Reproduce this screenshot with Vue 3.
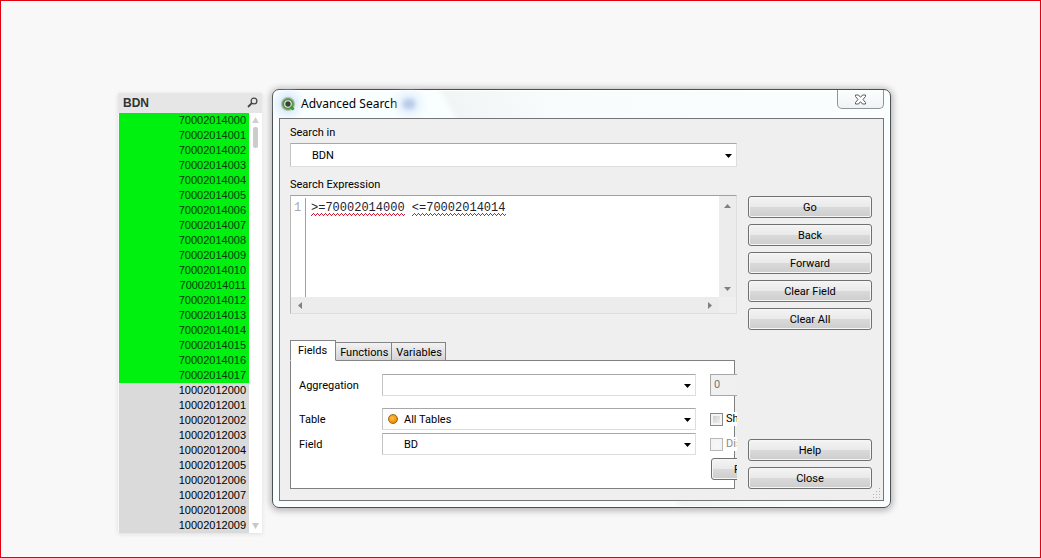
<script setup>
import { computed, ref } from 'vue'

const pad = (n) => String(n).padStart(3, '0')
const rows = [
  ...Array.from({ length: 18 }, (_, i) => ({ value: '70002014' + pad(i), selected: true })),
  ...Array.from({ length: 10 }, (_, i) => ({ value: '10002012' + pad(i), selected: false })),
]

const CHAR_WIDTH = 7.2
const expression = ref('>=70002014000 <=70002014014')
const words = computed(() => expression.value.split(' '))
const wordWidth = (word) => Math.round(word.length * CHAR_WIDTH)
const mainActions = ['Go', 'Back', 'Forward', 'Clear Field', 'Clear All']
const footActions = ['Help', 'Close']
const tabs = ['Fields', 'Functions', 'Variables']
const activeTab = ref('Fields')
</script>

<template>
  <main class="sheet">
    <section class="listbox" aria-label="BDN">
      <header class="listbox-head">
        <h2>BDN</h2>
        <button class="plain" type="button" aria-label="Search">
          <svg width="11" height="11" viewBox="0 0 11 11" fill="none" stroke="#444">
            <circle cx="7" cy="4" r="2.9" stroke-width="1.2" />
            <path d="M4.8 6.2 1 10" stroke-width="1.8" />
          </svg>
        </button>
      </header>
      <div class="listbox-body">
        <ul>
          <li v-for="row in rows" :key="row.value" :class="{ selected: row.selected }">{{ row.value }}</li>
        </ul>
        <div class="list-scroll">
          <svg width="7" height="6" viewBox="0 0 7 6"><path d="M3.5 0 7 6H0z" fill="#d0d0d0" /></svg>
          <span class="thumb"></span>
          <svg class="down" width="7" height="6" viewBox="0 0 7 6"><path d="M3.5 6 7 0H0z" fill="#c8c8c8" /></svg>
        </div>
      </div>
    </section>

    <section class="window" aria-label="Advanced Search">
      <header class="titlebar">
        <svg class="logo" width="16" height="16" viewBox="0 0 16 16">
          <circle cx="8" cy="8" r="7" fill="#a9bda4" />
          <circle cx="8" cy="8" r="4.8" fill="#e9f1e4" stroke="#5c8f50" stroke-width="2" />
          <path d="m10.5 10.5 4 4" stroke="#3f9a2c" stroke-width="2.6" />
          <circle cx="8" cy="8" r="2.7" fill="#34423a" />
        </svg>
        <h1>Advanced Search</h1>
        <span class="reflection"></span>
        <button class="close" type="button" aria-label="Close window">
          <svg width="13" height="11" viewBox="0 0 13 11">
            <path d="M1.5 1h3L6.5 3.300 8.500 1h3v1.500L9 5.500l2.500 3V10h-3l-2-2.300L4.500 10h-3V8.500L4 5.500l-2.500-3z" fill="#fff" stroke="#555b68" />
          </svg>
        </button>
      </header>

      <div class="client">
        <div class="content">
          <label class="caption" for="search-in">Search in</label>
          <div class="combo combo-tall">
            <select id="search-in"><option>BDN</option></select>
            <svg class="arrow" width="7" height="4" viewBox="0 0 7 4"><path d="M0 0h7L3.500 4z" /></svg>
          </div>

          <label class="caption caption-gap" for="expression">Search Expression</label>
          <div class="editor">
            <div class="code">
              <span class="gutter">1</span>
              <div class="code-area">
                <textarea id="expression" v-model="expression" spellcheck="false"></textarea>
                <div class="squiggles" aria-hidden="true">
                  <svg v-for="(word, i) in words" :key="i" :width="wordWidth(word)" height="3" shape-rendering="crispEdges">
                    <defs>
                      <pattern :id="'wave' + i" width="4" height="3" patternUnits="userSpaceOnUse">
                        <path d="M0 2h1v1H0zM1 1h1v1H1zM2 0h1v1H2zM3 1h1v1H3z" fill="#d41830" />
                      </pattern>
                    </defs>
                    <rect width="100%" height="3" :fill="'url(#wave' + i + ')'" />
                  </svg>
                </div>
              </div>
            </div>
            <div class="vbar">
              <svg width="7" height="4" viewBox="0 0 7 4"><path d="M3.500 0 7 4H0z" /></svg>
              <svg width="7" height="4" viewBox="0 0 7 4"><path d="M3.500 4 7 0H0z" /></svg>
            </div>
            <div class="hbar">
              <svg width="4" height="7" viewBox="0 0 4 7"><path d="M0 3.500 4 0v7z" /></svg>
              <svg width="4" height="7" viewBox="0 0 4 7"><path d="M4 3.500 0 0v7z" /></svg>
            </div>
          </div>

          <div class="tabs" role="tablist">
            <button
              v-for="tab in tabs"
              :key="tab"
              type="button"
              role="tab"
              class="tab"
              :class="{ active: tab === activeTab }"
              :aria-selected="tab === activeTab"
              @click="activeTab = tab"
            >{{ tab }}</button>
          </div>
          <div class="panel" role="tabpanel">
            <div class="form-row row-first">
              <label for="aggregation">Aggregation</label>
              <div class="combo">
                <select id="aggregation"><option></option></select>
                <svg class="arrow" width="7" height="4" viewBox="0 0 7 4"><path d="M0 0h7L3.500 4z" /></svg>
              </div>
              <div class="extra"><input class="amount" type="text" value="0" aria-label="Percentile" disabled /></div>
            </div>
            <div class="form-row">
              <label for="table">Table</label>
              <div class="combo">
                <select id="table"><option>All Tables</option></select>
                <span class="dot"></span>
                <svg class="arrow" width="7" height="4" viewBox="0 0 7 4"><path d="M0 0h7L3.500 4z" /></svg>
              </div>
              <div class="extra"><label class="check"><input type="checkbox" />Show</label></div>
            </div>
            <div class="form-row">
              <label for="field">Field</label>
              <div class="combo">
                <select id="field"><option>BD</option></select>
                <svg class="arrow" width="7" height="4" viewBox="0 0 7 4"><path d="M0 0h7L3.500 4z" /></svg>
              </div>
              <div class="extra"><label class="check off"><input type="checkbox" disabled />Distinct</label></div>
            </div>
            <div class="form-row row-last">
              <div class="extra"><button class="btn paste" type="button">Paste</button></div>
            </div>
          </div>
        </div>

        <div class="actions">
          <button v-for="a in mainActions" :key="a" class="btn" type="button">{{ a }}</button>
          <span class="spacer"></span>
          <button v-for="a in footActions" :key="a" class="btn" type="button">{{ a }}</button>
        </div>

        <svg class="grip" width="10" height="10" viewBox="0 0 10 10" fill="#b4b4b4">
          <path d="M8 0h1v1H8zM8 3h1v1H8zM5 3h1v1H5zM8 6h1v1H8zM5 6h1v1H5zM2 6h1v1H2zM8 9h1v1H8zM5 9h1v1H5zM2 9h1v1H2z" />
        </svg>
      </div>
    </section>
  </main>
</template>

<style>
body {
  margin: 0;
  background: #f8f8f8;
}
</style>

<style scoped>
* {
  box-sizing: border-box;
}
.sheet {
  display: flex;
  align-items: flex-start;
  gap: 10px;
  min-height: 100vh;
  padding: 88px 149px 24px 117px;
  border: 1px solid #e00010;
  background: #f8f8f8;
  font: 11px/14px Roboto, "Liberation Sans", sans-serif;
  color: #000;
}
button,
input,
select,
textarea {
  margin: 0;
  padding: 0;
  font: inherit;
  color: inherit;
}
svg {
  display: block;
  flex: none;
}
h1,
h2,
ul {
  margin: 0;
  padding: 0;
  list-style: none;
}

/* list box */
.listbox {
  flex: none;
  width: 144px;
  margin-top: 4px;
  box-shadow: 0 1px 4px #ddd;
}
.listbox-head {
  display: flex;
  align-items: center;
  justify-content: space-between;
  height: 20px;
  padding: 0 4px 2px 5px;
  background: #e6e6e6;
}
.listbox-head h2 {
  padding-top: 2px;
  font: bold 12px/18px "Liberation Sans", sans-serif;
  color: #333;
}
.plain {
  border: 0;
  background: none;
}
.listbox-body {
  display: flex;
}
.listbox-body ul {
  flex: 1;
  padding-left: 1px;
}
.listbox-body li {
  height: 15px;
  padding-right: 3px;
  background: #dadada;
  font: 11px/15px "Liberation Sans", sans-serif;
  text-align: right;
}
.listbox-body .selected {
  background: #00f010;
  color: #063c08;
}
.list-scroll {
  display: flex;
  flex-direction: column;
  align-items: center;
  width: 13px;
  padding: 4px 0;
  background: #fff;
}
.thumb {
  width: 5px;
  height: 21px;
  margin-top: 4px;
  border-radius: 2px;
  background: #ccc;
}
.down {
  margin-top: auto;
}

/* dialog window */
.window {
  flex: 1;
  min-width: 0;
  padding: 0 6px 6px;
  border: 1px solid #4c5052;
  border-radius: 7px;
  background: linear-gradient(60deg, #f9feff 47%, #f1f5f6 48%, #f8fcfc 60%, #fbfefe);
  box-shadow: inset 0 0 0 1px #fff, 0 1px 6px 2px #b8b8b8;
}
.titlebar {
  display: flex;
  align-items: center;
  height: 28px;
}
.logo {
  margin-left: 1px;
  border-radius: 50%;
  background: #dcebfa;
  box-shadow: 0 0 7px 4px #dcebfa;
}
.titlebar h1 {
  margin-left: 5px;
  font: 12px/28px "Noto Sans", sans-serif;
}
.reflection {
  width: 12px;
  height: 10px;
  margin-left: 6px;
  border-radius: 4px;
  background: #b9cbe8;
  box-shadow: 0 0 9px 5px #dcecfb;
  filter: blur(2px);
}
.close {
  display: flex;
  align-items: center;
  justify-content: center;
  align-self: flex-start;
  width: 47px;
  height: 19px;
  margin-left: auto;
  border: 1px solid #8f9499;
  border-top: 0;
  border-radius: 0 0 5px 5px;
  background: linear-gradient(#fdfefe, #eff3f4);
}
.client {
  position: relative;
  display: flex;
  gap: 11px;
  padding: 0 11px 11px 10px;
  border: 1px solid #757575;
  background: #efefef;
}
.content {
  flex: 1;
  min-width: 0;
}
.caption {
  display: block;
  padding: 7px 0 3px;
}
.caption-gap {
  padding-top: 11px;
}

.combo {
  position: relative;
  flex: 1;
  min-width: 0;
}
.combo select {
  display: block;
  width: 100%;
  height: 22px;
  padding: 2px 20px 0 21px;
  appearance: none;
  border: 1px solid #dedede;
  border-top-color: #a8a8a8;
  border-left-color: #c4c4c4;
  border-radius: 0;
  background: #fff;
}
.combo-tall select {
  height: 24px;
}
.arrow {
  position: absolute;
  top: 50%;
  right: 5px;
  margin-top: -1px;
}
.dot {
  position: absolute;
  top: 6px;
  left: 6px;
  width: 10px;
  height: 10px;
  border: 1px solid #96661c;
  border-radius: 50%;
  background: radial-gradient(circle at 40% 40%, #ffc04a, #ef8c00 70%);
}

/* expression editor */
.editor {
  display: grid;
  grid-template-columns: 1fr 17px;
  grid-template-rows: 101px 16px;
  border: 1px solid #dedede;
  border-top-color: #a0a0a0;
  border-left-color: #b8b8b8;
  background: #efefef;
}
.code {
  display: flex;
  background: #fff;
  font: 12px/14px "Liberation Mono", monospace;
}
.gutter {
  width: 15px;
  margin-top: 2px;
  padding: 3px 3px 0;
  border-right: 1px solid #a0a0a0;
  color: #a8a8a8;
}
.code-area {
  position: relative;
  flex: 1;
}
.code-area textarea {
  display: block;
  width: 100%;
  height: 100%;
  padding: 5px 5px 0;
  border: 0;
  outline: 0;
  resize: none;
  overflow: hidden;
  background: none;
  color: #223;
}
.squiggles {
  position: absolute;
  top: 17px;
  left: 5px;
  display: flex;
  gap: 7px;
  pointer-events: none;
}
.vbar,
.hbar {
  display: flex;
  align-items: center;
  justify-content: space-between;
  background: #ececec;
  fill: #808080;
}
.vbar {
  flex-direction: column;
  padding: 8px 0 6px;
}
.hbar {
  padding: 0 7px;
}

/* tabs */
.tabs {
  display: flex;
  align-items: flex-end;
  height: 21px;
  margin-top: 26px;
}
.tab {
  height: 19px;
  padding: 1px 3px 0 4px;
  border: 1px solid #858585;
  border-left-width: 0;
  background: linear-gradient(#f2f2f2, #d4d4d4);
  line-height: 17px;
}
.tab.active {
  position: relative;
  height: 21px;
  padding: 0 8px 0 7px;
  border-left-width: 1px;
  border-bottom-color: #fff;
  background: #fff;
}
.panel {
  margin: -1px 2px 0 0;
  padding: 13px 0 8px 8px;
  border: 1px solid #808080;
  background: #fff;
}
.form-row {
  display: flex;
  align-items: center;
  height: 22px;
  margin: 0 -3px 3px 0;
}
.row-first {
  margin-bottom: 12px;
}
.row-last {
  justify-content: flex-end;
  margin-bottom: 0;
}
.form-row > label {
  flex: none;
  width: 83px;
  padding-top: 2px;
}
.extra {
  flex: none;
  width: 27px;
  margin-left: 14px;
  overflow: hidden;
  background: #fff;
}
.amount {
  display: block;
  width: 60px;
  height: 22px;
  padding: 0 3px 2px;
  border: 1px solid #a8a8a8;
  background: #f0f0f0;
  color: #777;
}
.check {
  display: flex;
  align-items: center;
  gap: 3px;
  width: 90px;
}
.check input {
  flex: none;
  width: 13px;
  height: 13px;
  appearance: none;
  border: 1px solid #8a8a8a;
  background: linear-gradient(135deg, #c4c4c4, #fafafa);
  box-shadow: inset 0 0 0 2px #f4f4f4;
}
.off {
  color: #8a8a8a;
}
.check.off input {
  border-color: #b8b8b8;
  background: #f6f6f6;
}

.actions {
  display: flex;
  flex-direction: column;
  gap: 6px;
  width: 124px;
  padding-top: 77px;
}
.btn {
  height: 22px;
  padding-top: 1px;
  border: 1px solid #707070;
  border-radius: 3px;
  background: linear-gradient(#f4f4f4, #e9e9e9 50%, #dadada 50%, #cdcdcd);
  box-shadow: inset 0 0 0 1px #f6f6f6;
  line-height: 19px;
  text-align: center;
}
.actions .spacer {
  flex: 1;
}
.paste {
  display: block;
  width: 74px;
  margin-left: 1px;
}
.grip {
  position: absolute;
  right: 2px;
  bottom: 2px;
}
</style>
